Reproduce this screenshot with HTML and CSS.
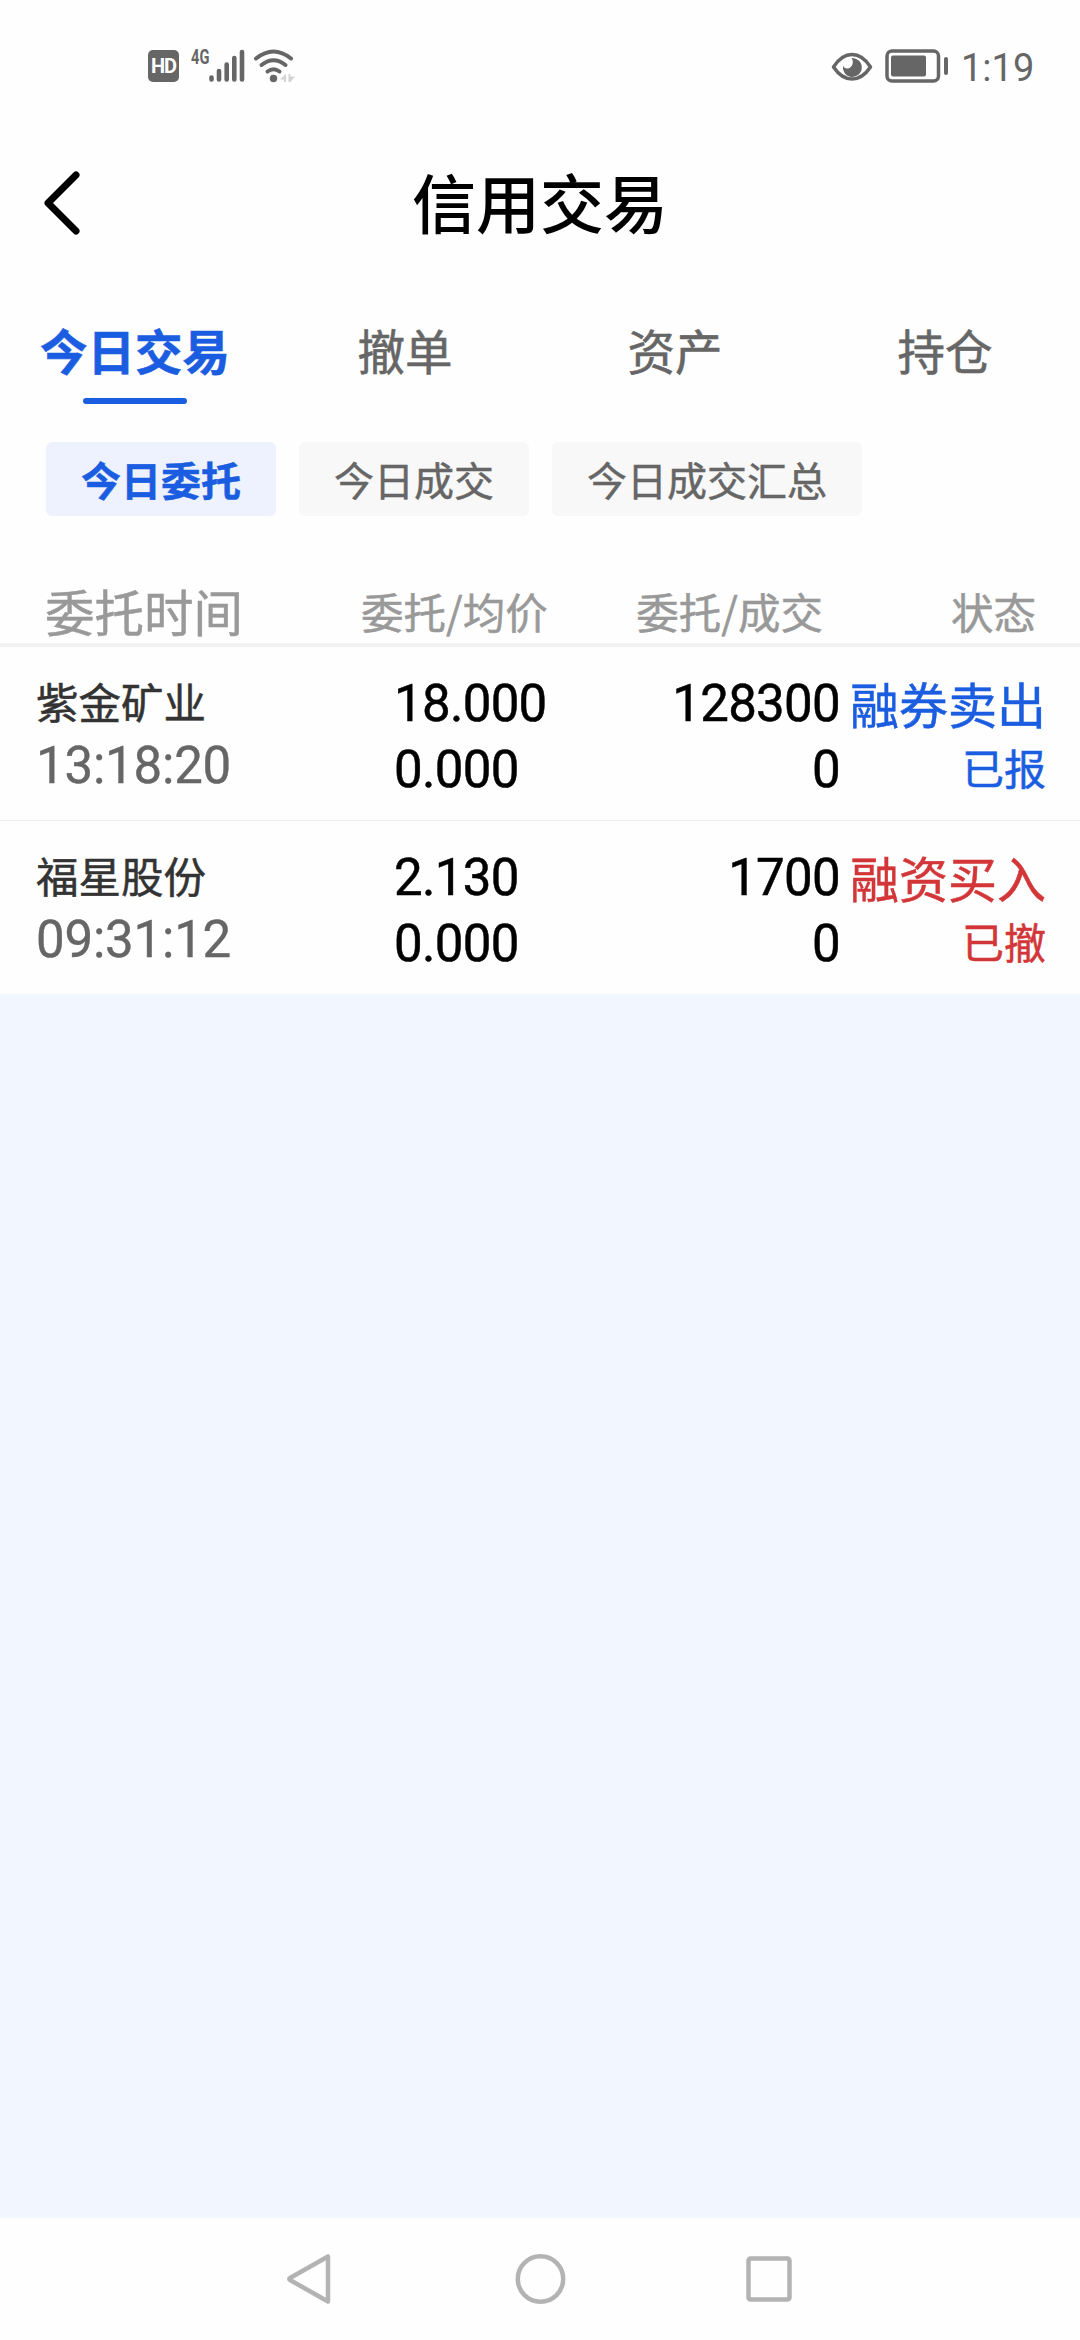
FILE: index.html
```html
<!DOCTYPE html>
<html lang="zh-CN">
<head>
    <meta charset="utf-8">
    <title>信用交易</title>
    <link rel="stylesheet" href="styles.css">
</head>
<body>
    <div class="statusbar">
        <div class="status-left">
            <span class="hd">HD</span>
            <span class="net">4G</span>
            <svg class="signal" width="36" height="34" viewBox="0 0 36 34" fill="none" stroke="#666" stroke-width="4.6" stroke-linecap="round">
                <path d="M2.5 28.5V30.5M10 22V30.5M17.7 15.5V30.5M25.3 9V30.5M33 3V30.5"/>
            </svg>
            <svg class="wifi" width="43" height="34" viewBox="0 0 43 34">
                <g fill="none" stroke="#666" stroke-width="4" stroke-linecap="round">
                    <path d="M3 9.5Q20.5 -4.5 38 9.5"/>
                    <path d="M8.5 16Q20.5 6.5 32.5 16"/>
                    <path d="M14.5 22.5Q20.5 18 26.5 22.5"/>
                </g>
                <circle cx="20.5" cy="29.5" r="3.7" fill="#666"/>
                <path d="M33 25V33H31V30.500H27ZM35.500 25H37.500V27.500H42L37.500 33H35.500Z" fill="#d2d2d2"/>
            </svg>
        </div>
        <div class="status-right">
            <svg class="eye" width="42" height="30" viewBox="0 0 42 30">
                <path d="M2.500 15Q10.500 2.500 21 2.500T39.500 15Q31.500 27 21 27T2.500 15Z" fill="none" stroke="#666" stroke-width="3.500" stroke-linejoin="round"/>
                <path d="M20.500 6A9.500 9.500 0 1 1 12 13.500Q13 17 17 16.500C22 15.500 23 9 20.500 6Z" fill="#666"/>
            </svg>
            <svg class="battery" width="64" height="34" viewBox="0 0 64 34">
                <rect x="2" y="2" width="51.500" height="30" rx="5" fill="none" stroke="#666" stroke-width="3.500"/>
                <rect x="6" y="6.500" width="35" height="21" rx="2" fill="#666"/>
                <rect x="59" y="8" width="4" height="18" rx="2" fill="#666"/>
            </svg>
            <span class="clock">1:19</span>
        </div>
    </div>

    <div class="header">
        <svg class="back" width="40" height="70" viewBox="0 0 40 70">
            <path d="M33 7L5 35L33 63" fill="none" stroke="#000" stroke-width="7" stroke-linecap="round" stroke-linejoin="round"/>
        </svg>
        <h1>信用交易</h1>
    </div>

    <div class="tabs">
        <div class="tab active">今日交易</div>
        <div class="tab">撤单</div>
        <div class="tab">资产</div>
        <div class="tab">持仓</div>
    </div>

    <div class="chips">
        <div class="chip active">今日委托</div>
        <div class="chip">今日成交</div>
        <div class="chip">今日成交汇总</div>
    </div>

    <div class="table-head">
        <div class="h-time">委托时间</div>
        <div class="h-price">委托/均价</div>
        <div class="h-amount">委托/成交</div>
        <div class="h-state">状态</div>
    </div>

    <div class="order">
        <div class="stock">
            <div class="name">紫金矿业</div>
            <div class="time">13:18:20</div>
        </div>
        <div class="price">
            <div>18.000</div>
            <div>0.000</div>
        </div>
        <div class="amount">
            <div>128300</div>
            <div>0</div>
        </div>
        <div class="state sell">
            <div class="kind">融券卖出</div>
            <div class="result">已报</div>
        </div>
    </div>

    <div class="order">
        <div class="stock">
            <div class="name">福星股份</div>
            <div class="time">09:31:12</div>
        </div>
        <div class="price">
            <div>2.130</div>
            <div>0.000</div>
        </div>
        <div class="amount">
            <div>1700</div>
            <div>0</div>
        </div>
        <div class="state buy">
            <div class="kind">融资买入</div>
            <div class="result">已撤</div>
        </div>
    </div>

    <div class="empty"></div>

    <div class="navbar">
        <svg width="50" height="54" viewBox="0 0 50 54" fill="none" stroke="#b3b3b3" stroke-width="4.5" stroke-linejoin="round">
            <path d="M44 4.500V49.500L6 28Q4.500 27 6 26Z"/>
        </svg>
        <svg width="54" height="54" viewBox="0 0 54 54" fill="none" stroke="#b3b3b3" stroke-width="4.5">
            <circle cx="27.5" cy="27" r="22.7"/>
        </svg>
        <svg width="50" height="54" viewBox="0 0 50 54" fill="none" stroke="#b3b3b3" stroke-width="4.5">
            <rect x="2.500" y="6.500" width="41" height="41" rx="2"/>
        </svg>
    </div>
</body>
</html>
```
FILE: styles.css
```css
* {
    box-sizing: border-box;
}
body {
    margin: 0;
    width: 1080px;
    height: 2340px;
    display: flex;
    flex-direction: column;
    font-family: "Noto Sans CJK SC", sans-serif;
    background-color: #fefefe;
    color: #000;
}
svg {
    display: block;
    flex: none;
}

/* status bar */
.statusbar {
    height: 132px;
    padding: 49px 48px 0 148px;
    display: flex;
    justify-content: space-between;
    align-items: flex-start;
    color: #666;
}
.status-left, .status-right {
    display: flex;
}
.hd {
    width: 31px;
    height: 32px;
    margin-top: 1px;
    border-radius: 5px;
    background-color: #666;
    color: #fff;
    font: bold 20px/33px Roboto, sans-serif;
    letter-spacing: -1px;
    text-align: center;
}
.net {
    width: 18px;
    height: 16px;
    margin-left: 12px;
    font: bold 20px/16px Roboto, sans-serif;
    transform: scaleX(0.73);
    transform-origin: left;
}
.wifi {
    margin-left: 8px;
}
.eye {
    margin: 3px 12px 0 0;
}
.clock {
    width: 71px;
    margin-left: 12px;
    font: 38px/38px Roboto, sans-serif;
}

/* title */
.header {
    height: 142px;
    padding: 0 40px;
    display: grid;
    grid-template-columns: 40px 1fr 40px;
    align-items: center;
}
h1 {
    margin: -6px 0 0;
    font-size: 64px;
    line-height: 80px;
    font-weight: 500;
    text-align: center;
}
.back {
    margin-left: 3px;
}

/* tabs */
.tabs {
    height: 168px;
    padding-top: 44px;
    display: grid;
    grid-template-columns: repeat(4, 1fr);
}
.tab {
    font-size: 47.5px;
    line-height: 64px;
    text-align: center;
    color: #666;
    -webkit-text-stroke: 0.6px;
}
.tab.active {
    color: #1b5de0;
    font-weight: bold;
}
.tab.active::after {
    content: "";
    display: block;
    width: 104px;
    height: 6px;
    margin: 16px auto 0;
    border-radius: 3px;
    background-color: #1b5de0;
}
.chips {
    display: flex;
    gap: 23px;
    padding-left: 46px;
    height: 128px;
}
.chip {
    height: 74px;
    padding: 0 35px;
    border-radius: 6px;
    background-color: #f8f8f8;
    color: #666;
    font-size: 40px;
    line-height: 74px;
    -webkit-text-stroke: 0.5px;
}
.chip.active {
    background-color: #edf2fe;
    color: #1b5de0;
    font-weight: bold;
}

/* order list */
.table-head {
    height: 77px;
    padding: 0 44px 0 45px;
    border-bottom: 4px solid #f2f2f2;
    display: grid;
    grid-template-columns: 316px 310px 152px 1fr;
    color: #999;
    font-size: 42.5px;
    line-height: 81px;
    white-space: nowrap;
    -webkit-text-stroke: 0.5px;
}
.h-time {
    font-size: 49.5px;
}
.h-amount {
    display: flex;
    justify-content: flex-end;
}
.h-state {
    text-align: right;
}
.order {
    height: 174px;
    padding: 24px 34px 0 36px;
    border-bottom: 1px solid #ececec;
    display: grid;
    grid-template-columns: 358px 200px 246px 1fr;
    white-space: nowrap;
}
.order:nth-last-child(3) {
    border-bottom: none;
    height: 173px;
}
.name {
    font-size: 42.5px;
    line-height: 66px;
    margin-top: -3px;
    color: #333;
    -webkit-text-stroke: 0.5px;
}
.time, .price, .amount {
    font-family: Roboto, sans-serif;
    font-size: 51px;
    line-height: 66px;
    letter-spacing: -0.7px;
}
.time {
    color: #666;
    line-height: 64px;
    letter-spacing: -0.2px;
    -webkit-text-stroke: 0.4px;
}
.price, .amount {
    -webkit-text-stroke: 0.5px;
}
.amount {
    text-align: right;
}
.state {
    margin-top: -3px;
    text-align: right;
    -webkit-text-stroke: 0.5px;
}
.kind {
    font-size: 49px;
    line-height: 70px;
}
.result {
    font-size: 42px;
    line-height: 58px;
}
.sell {
    color: #1b5de0;
}
.buy {
    color: #d33638;
}
.empty {
    flex: 1;
    background-color: #f2f6ff;
}

/* system keys */
.navbar {
    height: 122px;
    padding: 34px 284px 0;
    display: flex;
    justify-content: space-between;
}
```
